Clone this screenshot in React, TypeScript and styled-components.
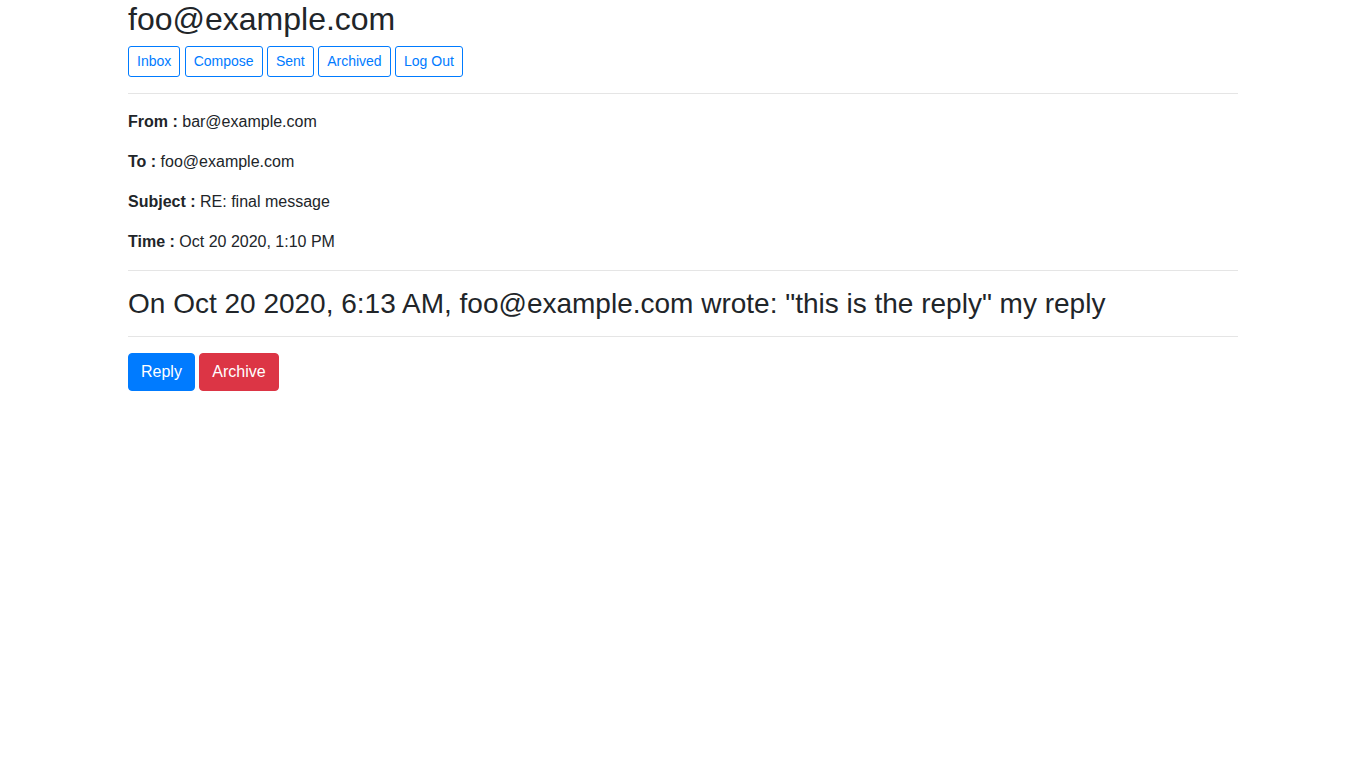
import React from 'react'
import styled, { createGlobalStyle } from 'styled-components'

const GlobalStyle = createGlobalStyle`
  html, body {
    margin: 0;
    padding: 0;
    background: #fff;
  }
  body {
    font-family: "Liberation Sans", Arial, sans-serif;
    font-size: 16px;
    line-height: 1.5;
    color: #212529;
  }
  * {
    box-sizing: border-box;
  }
`;

const Container = styled.div`
  width: 1140px;
  margin: 0 auto;
  padding: 0 15px;
`;

const Title = styled.h2`
  margin: 0 0 8px;
  font-size: 32px;
  font-weight: 500;
  line-height: 1.2;
`;

const Nav = styled.div`
  display: flex;
  gap: 4.4px;
`;

const Button = styled.button<{ $variant: 'outline' | 'primary' | 'danger'; $small?: boolean }>`
  display: inline-block;
  font-family: inherit;
  font-weight: 400;
  font-size: ${p => (p.$small ? '14px' : '16px')};
  line-height: 1.5;
  padding: ${p => (p.$small ? '4px 8px' : '6px 12px')};
  border-radius: ${p => (p.$small ? '3px' : '4px')};
  border: 1px solid ${p => (p.$variant === 'danger' ? '#dc3545' : '#007bff')};
  background: ${p =>
    p.$variant === 'outline' ? 'transparent' : p.$variant === 'danger' ? '#dc3545' : '#007bff'};
  color: ${p => (p.$variant === 'outline' ? '#007bff' : '#fff')};
  cursor: pointer;
`;

const Rule = styled.hr<{ $top?: number }>`
  margin: ${p => p.$top ?? 16}px 0 16px;
  border: 0;
  border-top: 1px solid rgba(0, 0, 0, 0.1);
`;

const Field = styled.p`
  margin: 0 0 16px;
`;

const Label = styled.b`
  font-weight: 700;
`;

const Body = styled.h3`
  margin: 0;
  font-size: 28px;
  font-weight: 500;
  line-height: 1.2;
`;

const Actions = styled.div`
  display: flex;
  gap: 4.4px;
`;

const fields = [
  { label: 'From', value: 'bar@example.com' },
  { label: 'To', value: 'foo@example.com' },
  { label: 'Subject', value: 'RE: final message' },
  { label: 'Time', value: 'Oct 20 2020, 1:10 PM' },
];

export default function App() {
  return (
    <>
      <GlobalStyle />
      <Container>
        <Title>foo@example.com</Title>
        <Nav>
          {['Inbox', 'Compose', 'Sent', 'Archived', 'Log Out'].map(name => (
            <Button key={name} $variant="outline" $small>
              {name}
            </Button>
          ))}
        </Nav>
        <Rule />
        {fields.map(f => (
          <Field key={f.label}>
            <Label>{f.label} :</Label> {f.value}
          </Field>
        ))}
        <Rule $top={0} />
        <Body>On Oct 20 2020, 6:13 AM, foo@example.com wrote: "this is the reply" my reply</Body>
        <Rule $top={15} />
        <Actions>
          <Button $variant="primary">Reply</Button>
          <Button $variant="danger">Archive</Button>
        </Actions>
      </Container>
    </>
  );
}
